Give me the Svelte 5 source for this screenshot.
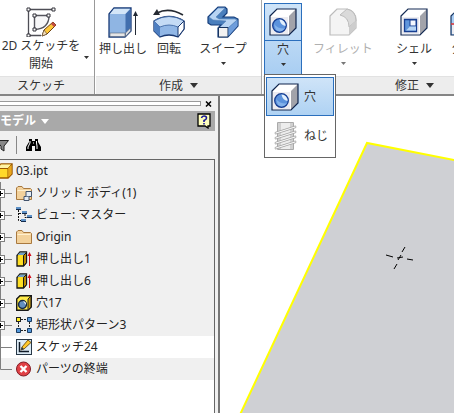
<script>
  const rows = [
    { icon: 'solid', label: 'ソリッド ボディ(1)', open: true },
    { icon: 'view', label: 'ビュー: マスター', open: true },
    { icon: 'folder', label: 'Origin', open: true },
    { icon: 'extrude', label: '押し出し1', open: true },
    { icon: 'extrude', label: '押し出し6', open: true },
    { icon: 'hole', label: '穴17', open: true },
    { icon: 'pattern', label: '矩形状パターン3', open: true },
    { icon: 'sketch', label: 'スケッチ24', active: true },
    { icon: 'end', label: 'パーツの終端', last: true }
  ];
</script>

{#snippet holeBox()}
  <svg width="28" height="28" viewBox="0 0 28 28" aria-hidden="true">
    <path d="M1 8 8 1H27V20L20 27H1Z" fill="#fff" />
    <path d="M20 8 27 1V20L20 27Z" fill="#a2a3aa" />
    <path d="M2 9H19V26H2Z" fill="#ececf1" />
    <path d="M1 8 8 1H27V20L20 27H1Z" fill="none" stroke="#10254d" stroke-width="1.2" />
    <circle cx="10.500" cy="17.500" r="6.800" fill="#5b92dc" stroke="#153d91" stroke-width="1.3" />
    <path d="M10.500 11.500A6 6 0 0 1 16.500 18Q11.500 17 10.500 11.500Z" fill="#e3f0fd" />
    <path d="M5 16Q9 21 16 20.500Q12 25 7 22Z" fill="#83b2eb" />
  </svg>
{/snippet}

{#snippet caret()}
  <svg class="caret" width="5" height="3" viewBox="0 0 5 3" aria-hidden="true"><path d="M0 0H5L2.5 3Z" fill="currentColor" /></svg>
{/snippet}

{#snippet bigCaret()}
  <svg width="8" height="5" viewBox="0 0 8 5" aria-hidden="true"><path d="M0 0H8L4 5Z" fill="currentColor" /></svg>
{/snippet}

{#snippet treeIcon(name)}
  <svg width="16" height="16" viewBox="0 0 16 16" aria-hidden="true">
    {#if name === 'folder' || name === 'solid'}
      <path d="M.5 14.5V3L2 1.5H6L7.5 3.5H14.5L15.5 4.5V14.5Z" fill="#f3d29c" stroke="#a9793f" />
      <path d="M1.5 5.5H14.5" stroke="#fff0cf" />
      {#if name === 'solid'}
        <path d="M10 6.500H15.500V11.500H13V15.500H8V11.500H10Z" fill="#e5edf5" stroke="#42536c" />
        <path d="M10 11.500H13" fill="none" stroke="#667991" />
      {/if}
    {:else if name === 'view'}
      <path d="M2.500 3V13.500H5M3 6.500H7M9 7V10.500H12" fill="none" stroke="#111" stroke-dasharray="2 1" />
      <path d="M0 0H5V3H0ZM6 4H11V7H6ZM11 8H16V11H11ZM5 12H10V15H5Z" fill="#5e92c8" />
      <path d="M0 2.500H5M6 6.500H11M11 10.500H16M5 14.500H10" stroke="#142b4c" />
    {:else if name === 'extrude'}
      <path d="M1 4.500 4 1H10.500V11.500L7.500 15H1Z" fill="#ffdf24" stroke="#161616" stroke-width="1.3" />
      <path d="M1.500 4 4 1.500H10L7.500 4Z" fill="#6d9fca" />
      <path d="M7.500 4.500 10.500 1.500V11.500L7.500 15Z" fill="#b68900" stroke="#161616" />
      <path d="M13.500 15V3" stroke="#c4141d" /><path d="M11.500 5 13.500 1 15.500 5Z" fill="#d20b18" />
    {:else if name === 'hole'}
      <path d="M.7 4 4 .7H15.300V12L12 15.300H.7Z" fill="#ffeb49" stroke="#171717" stroke-width="1.4" />
      <path d="M12 4 15 1V12L12 15Z" fill="#c99c06" stroke="#222" />
      <circle cx="6.500" cy="9.500" r="3.900" fill="#628fc0" stroke="#172943" stroke-width="1.500" />
      <path d="M7 6A3.500 3.500 0 0 1 10 10Z" fill="#f3f8ff" />
    {:else if name === 'pattern'}
      <path d="M5 2.500H11M2.500 5V11M5 13.500H11M13.500 5V11" fill="none" stroke="#222" stroke-dasharray="2 1" />
      <rect x=".5" y=".5" width="4" height="4" fill="#ffed22" stroke="#222" />
      <path d="M11.500.5H15.500V4.500H11.500ZM.5 11.500H4.500V15.500H.5ZM11.500 11.500H15.500V15.500H11.500Z" fill="#5599dc" stroke="#193b61" />
    {:else if name === 'sketch'}
      <rect x=".5" y=".5" width="15" height="15" fill="#dceaf4" stroke="#283847" />
      <path d="M3.500 3V12.500H13" fill="none" stroke="#101b27" stroke-width="1.500" />
      <path d="M5 11 6 8 12 1 15 3.500 8 10Z" fill="#ffc829" stroke="#7c5b16" />
      <path d="M5 11 6 8 8 10Z" fill="#243751" />
    {:else}
      <circle cx="7.500" cy="8" r="7" fill="#e04045" stroke="#821b24" />
      <path d="M4.500 5 10.500 11M10.500 5 4.500 11" stroke="#fff" stroke-width="2.400" />
    {/if}
  </svg>
{/snippet}

<div class="app">
  <header class="ribbon">
    <section class="group sketch">
      <div class="tools">
        <button class="tool new-sketch">
          <span class="pic"><svg width="32" height="32" viewBox="0 0 32 32" aria-hidden="true">
            <path d="M29 4.500H3.500V30.500H16" fill="none" stroke="#4e4e56" stroke-width="1.300" />
            <path d="M9.500 10.500H24Q24 24 9.500 24.500Z" fill="#f7f7f8" stroke="#55555d" stroke-width="1.400" />
            <path d="M2 3H5V6H2ZM27 3H30V6H27ZM2 29H5V32H2ZM8 9H11V12H8ZM22 9H25V12H22ZM8 23H11V26H8Z" fill="#fff" stroke="#33333a" />
            <path d="M17 31 19 25 28 17 31 20 22 29Z" fill="#ffc83a" stroke="#70420f" />
            <path d="M26 19 28 17 31 20 29 22Z" fill="#c24c43" />
            <path d="M17 31 19 25 22 29Z" fill="#f7dfbb" stroke="#544431" stroke-width=".6" />
          </svg></span>
          <span>2D スケッチを</span><span>開始</span>
        </button>
        <span class="side-caret">{@render caret()}</span>
      </div>
      <h2>スケッチ</h2>
    </section>

    <section class="group create">
      <div class="tools">
        <button class="tool w52">
          <span class="pic"><svg width="32" height="32" viewBox="0 0 32 32" aria-hidden="true">
            <path d="M2 8 7 2H24V25L18 31H2Z" fill="#8fb5e3" stroke="#193b78" stroke-width="1.300" />
            <path d="M3 8 7 2.700H23L18.500 8Z" fill="#d4e6f8" />
            <path d="M18.500 8 23.500 3V25L18.500 30Z" fill="#426fae" />
            <path d="M3 27H18V30.500H3ZM18.500 27 23.500 22V25L18.500 30.500Z" fill="#e6e6e6" stroke="#52617b" stroke-width=".6" />
            <path d="M28.500 29V8" stroke="#222934" /><path d="M26 10 28.500 5 31 10Z" fill="#222934" />
          </svg></span>
          <span>押し出し</span>
        </button>
        <button class="tool w40">
          <span class="pic"><svg width="32" height="32" viewBox="0 0 32 32" aria-hidden="true">
            <path d="M4 7Q16 1 30 9" fill="none" stroke="#252a32" stroke-width="1.600" /><path d="M0 9 4 3 7 9Z" fill="#252a32" />
            <path d="M1 15Q16 6 31 15V23L25 31Q16 27 7 31L1 25Z" fill="#91b7e6" stroke="#17366f" stroke-width="1.300" />
            <path d="M1 15Q16 6 31 15L25 21Q16 17 7 21Z" fill="#c4dbf5" stroke="#36609d" stroke-width=".8" />
            <path d="M25 21 31 15V23L25 31Z" fill="#fff" stroke="#17366f" />
            <path d="M1 15 7 21V31L1 25Z" fill="#4e7fc1" />
          </svg></span>
          <span>回転</span>
        </button>
        <button class="tool w68">
          <span class="pic"><svg width="32" height="32" viewBox="0 0 32 32" aria-hidden="true">
            <path d="M1 11 11 1H18L20 3V7L16 11H27L31 13V20L21 31H11V22L14 19H4L1 17Z" fill="#4a7fbd" stroke="#153d7b" stroke-width="1.200" />
            <path d="M2 11 11 2H18L9 11 12 13H28L30 14 21 22H12L19 15 6 14Z" fill="#b8d4f3" stroke="#5482b7" stroke-width=".6" />
            <path d="M11.500 21.500H21V31H11.500Z" fill="#f2f2f2" stroke="#173460" />
            <path d="M21.500 22 30.500 14V20L21.500 30Z" fill="#6f9edc" />
          </svg></span>
          <span>スイープ</span>{@render caret()}
        </button>
      </div>
      <h2>作成 {@render bigCaret()}</h2>
    </section>

    <section class="group modify">
      <div class="tools">
        <div class="hole-wrap">
          <button class="tool selected" aria-expanded="true"><span class="pic">{@render holeBox()}</span><span>穴</span>{@render caret()}</button>
          <div class="menu" role="menu">
            <button class="current" role="menuitem">{@render holeBox()}<span>穴</span></button>
            <button role="menuitem">
              <svg width="28" height="28" viewBox="0 0 28 28" aria-hidden="true">
                <path d="M6.500 .5H22.500V27.500H6.500Z" fill="#ededed" stroke="#aaa" />
                <path d="M7 1H10V27H7ZM19 1H22V27H19Z" fill="#d0d0d0" />
                <path d="M5 11 24 5M5 16 24 10M5 21 24 15M5 26 24 20" stroke="#a4a4a4" stroke-width="2.800" stroke-linecap="round" />
                <path d="M5 11 24 5M5 16 24 10M5 21 24 15M5 26 24 20" stroke="#f8f8f8" stroke-width="1.300" stroke-linecap="round" />
              </svg>
              <span>ねじ</span>
            </button>
          </div>
        </div>
        <button class="tool w82" disabled>
          <span class="pic"><svg width="28" height="28" viewBox="0 0 28 28" aria-hidden="true">
            <path d="M1 8 8 1H18Q27 3 27 12V20L20 27H1Z" fill="#f4f4f4" stroke="#bcbcbc" stroke-width="1.200" />
            <path d="M11 7 18 1Q27 3 27 13L20 19Q20 9 11 7Z" fill="#dadada" stroke="#bcbcbc" />
            <path d="M20 19 27 13V20L20 27Z" fill="#cdcdcd" />
          </svg></span>
          <span>フィレット</span>{@render caret()}
        </button>
        <button class="tool w60">
          <span class="pic"><svg width="28" height="28" viewBox="0 0 28 28" aria-hidden="true">
            <path d="M1 8 8 1H27V20L20 27H1Z" fill="#fff" />
            <path d="M20 8 27 1V20L20 27Z" fill="#a2a3aa" /><path d="M2 9H19V26H2Z" fill="#ececf1" />
            <path d="M1 8 8 1H27V20L20 27H1Z" fill="none" stroke="#152b54" stroke-width="1.200" />
            <path d="M4.500 11.500H16.500V23.500H4.500Z" fill="#5f96dc" stroke="#173e91" stroke-width="1.300" />
            <path d="M10 12H16V18H10Z" fill="#f4f8ff" stroke="#173e91" /><path d="M6 22.500 10 18.500H16V22.500Z" fill="#b5d4f4" />
          </svg></span>
          <span>シェル</span>{@render caret()}
        </button>
        <button class="tool w40">
          <span class="pic"><svg width="28" height="28" viewBox="0 0 28 28" aria-hidden="true">
            <path d="M1 8 8 1H27V20L20 27H1Z" fill="#a9cdf4" stroke="#173460" stroke-width="1.200" />
            <path d="M2 17H20V26H2Z" fill="#ececf1" /><path d="M1 16H20L27 9" fill="none" stroke="#e03434" stroke-width="1.300" />
          </svg></span>
          <span>分割</span>
        </button>
      </div>
      <h2>修正 {@render bigCaret()}</h2>
    </section>
  </header>

  <main>
    <aside>
      <div class="grip"><i></i>
        <button aria-label="閉じる"><svg width="7" height="6" viewBox="0 0 7 6"><path d="M1 .5 6 5.500M6 .5 1 5.500" stroke="#000" stroke-width="1.500" /></svg></button>
      </div>
      <div class="title">
        <button>モデル {@render bigCaret()}</button>
        <button aria-label="ヘルプ"><svg width="14" height="16" viewBox="0 0 14 16">
          <path d="M1 1H13V13H11V15L8 13H1Z" fill="#ffffbd" stroke="#000" stroke-width="1.300" />
          <path d="M4.500 5Q5 3 7 3Q9.500 3 9.500 5Q9.500 6.500 7 7.500V9M7 10V11.500" fill="none" stroke="#171796" stroke-width="1.600" />
        </svg></button>
      </div>
      <div class="filters">
        <button aria-label="フィルタ"><svg width="9" height="13" viewBox="0 0 9 13"><path d="M-4 1.500H8.500L4 7V12L1 10V7Z" fill="#888" stroke="#222" /></svg></button>
        <hr />
        <button aria-label="検索"><svg width="15" height="14" viewBox="0 0 15 14">
          <path d="M3 1H6V3H9V1H12V4L15 9V13H9V8H6V13H0V9L3 4Z" fill="#000" />
          <path d="M4 3V5L2 9V11M10.500 3V5L11 8V11M7 5H8" fill="none" stroke="#fff" />
        </svg></button>
      </div>
      <ul>
        <li class="root">
          <svg width="13" height="16" viewBox="0 0 13 16" aria-hidden="true">
            <path d="M-3 5 1 1H12L12 11 8 15H-3Z" fill="#ffd829" stroke="#9b5700" stroke-width="1.400" />
            <path d="M-3 5 1 1.500H11L8 5Z" fill="#fff3a4" /><path d="M0 5.500H8V15M8 5.500 12 1" fill="none" stroke="#9b5700" />
            <path d="M8.500 6 11.500 2V11L8.500 14Z" fill="#eaa51c" />
          </svg>
          <span>03.ipt</span>
        </li>
        {#each rows as row}
          <li class:active={row.active}>
            <svg width="12" height="22" viewBox="0 0 12 22" aria-hidden="true">
              <path d={row.last ? 'M.5 0V11.500H12' : 'M.5 0V22M0 11.500H12'} fill="none" stroke="#808080" />
              {#if row.open}
                <rect x="-4.500" y="7.500" width="9" height="8" fill="#fff" stroke="#808080" />
                <path d="M0 11.500H3M.5 9V14" stroke="#000" />
              {/if}
            </svg>
            {@render treeIcon(row.icon)}
            <span>{row.label}</span>
          </li>
        {/each}
      </ul>
    </aside>
    <div class="canvas">
      <svg width="1000" height="800" viewBox="0 0 1000 800" aria-label="モデル ビュー">
        <path d="M147 47 1000 213V800H-205Z" fill="#cfd0d4" />
        <path d="M-205 800 147 47 1000 213" fill="none" stroke="#ffff00" stroke-width="2" />
        <path d="M185 151 182 156M177 168 174 173M166 159 173 161M187 163 193 164M177 162 183 161M181 159 178 164" fill="none" stroke="#000" />
      </svg>
    </div>
  </main>
</div>

<style>
  :global(body) { margin: 0; }
  .app {
    min-height: 100vh;
    display: flex;
    flex-direction: column;
    overflow: hidden;
    background: #fff;
    color: #333;
    font: 12px/18px "Noto Sans", "Noto Sans CJK JP", sans-serif;
  }
  button {
    margin: 0;
    padding: 0;
    border: 0;
    background: none;
    color: inherit;
    font: inherit;
  }
  svg { display: block; flex-shrink: 0; }
  .ribbon { display: flex; border-bottom: 2px solid #858585; }
  .group { flex-shrink: 0; display: flex; flex-direction: column; }
  .sketch { width: 94px; border-right: 1px solid #999; }
  .create { width: 165px; border-right: 1px solid #aaa; margin-left: 1px; }
  .modify { flex: 1; min-width: 0; margin-left: 1px; }
  .tools { display: flex; height: 76px; }
  .create .tools, .modify .tools { padding-left: 1px; }
  h2 {
    margin: 0;
    height: 18px;
    display: flex;
    align-items: center;
    justify-content: center;
    gap: 7px;
    background: #ededed;
    border-top: 1px solid #e2e2e2;
    box-sizing: border-box;
    font-size: 12px;
    font-weight: 400;
  }
  .sketch h2 { padding-right: 12px; }
  .modify h2 { padding-left: 132px; justify-content: flex-start; }
  .tool {
    flex-shrink: 0;
    display: flex;
    flex-direction: column;
    align-items: center;
    box-sizing: border-box;
    padding-top: 4px;
    height: 76px;
    white-space: nowrap;
  }
  .pic { height: 36px; display: flex; align-items: center; }
  .caret { margin-top: 4px; }
  .new-sketch { width: 82px; }
  .new-sketch .pic { height: 33px; }
  .side-caret { padding: 52px 0 0 2px; }
  .w40 { width: 40px; }
  .w52 { width: 52px; }
  .w60 { width: 60px; }
  .w68 { width: 68px; }
  .w82 { width: 82px; }
  .tool:disabled { color: #b0b0b0; }
  .tool:disabled .caret { color: #777; }
  .hole-wrap { position: relative; width: 38px; }
  .selected {
    width: 38px;
    height: 72px;
    margin-top: 3px;
    padding-top: 0;
    border: 1px solid #2b6fbd;
    background: linear-gradient(#cfe4f8, #a9cef2);
  }
  .selected .pic {
    width: 100%;
    height: 36px;
    justify-content: center;
    border-bottom: 1px solid #2b6fbd;
  }
  .menu {
    position: absolute;
    z-index: 2;
    top: 74px;
    left: 0;
    width: 72px;
    height: 84px;
    box-sizing: border-box;
    padding: 2px 1px;
    border: 1px solid #666;
    background: #fff;
  }
  .menu button {
    width: 100%;
    height: 39px;
    box-sizing: border-box;
    padding-left: 4px;
    display: flex;
    align-items: center;
    gap: 5px;
    border: 1px solid transparent;
  }
  .menu .current { border-color: #2b6fbd; background: linear-gradient(#cfe4f8, #afd2f3); }
  main { flex: 1; display: flex; }
  aside {
    width: 218px;
    flex-shrink: 0;
    border-right: 2px solid #777;
    background: #f0f0f0;
    color: #222;
    display: flex;
    flex-direction: column;
  }
  .grip { height: 15px; display: flex; align-items: center; gap: 4px; }
  .grip i { width: 201px; height: 5px; box-sizing: border-box; border: 1px solid #999; border-left: 0; background: #fff; }
  .title {
    width: 215px;
    height: 20px;
    box-sizing: border-box;
    padding-right: 4px;
    display: flex;
    align-items: center;
    justify-content: space-between;
    background: #a9a9a9;
    color: #fff;
  }
  .title button { display: flex; align-items: center; gap: 5px; font-weight: 700; }
  .filters { height: 28px; display: flex; align-items: center; }
  .filters hr { width: 1px; height: 18px; margin: 0 9px 0 7px; border: 0; background: #888; }
  ul {
    flex: 1;
    width: 215px;
    box-sizing: border-box;
    margin: 0;
    padding: 0;
    list-style: none;
    border-top: 1px solid #666;
    border-right: 1px solid #666;
    background: #fff;
  }
  li {
    height: 22px;
    display: flex;
    align-items: center;
    gap: 4px;
    background: #f0f0f0;
    white-space: nowrap;
  }
  .root { gap: 3px; }
  .active { background: #fff; }
  .canvas { position: relative; flex: 1; min-width: 0; overflow: hidden; background: #fff; }
  .canvas svg { position: absolute; top: 0; left: 0; }
</style>
